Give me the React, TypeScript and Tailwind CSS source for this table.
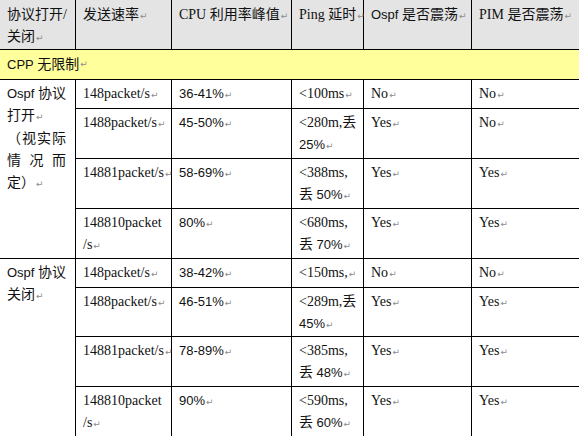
import type { ReactNode } from "react";

const serif = "font-['Liberation_Serif','Noto_Sans_CJK_SC',serif]";
const sans = "font-['Liberation_Sans','Noto_Sans_CJK_SC',sans-serif] text-[13px]";

function M() {
  return (
    <span className="ml-[1px] font-['DejaVu_Sans',sans-serif] text-[9px] text-[#8c8c8c]">
      ↵
    </span>
  );
}

function S({ children }: { children: ReactNode }) {
  return <span className={sans}>{children}</span>;
}

function Cell({
  lines,
  className = "",
  last = false,
}: {
  lines: ReactNode[];
  className?: string;
  last?: boolean;
}) {
  return (
    <div
      className={`${last ? "" : "border-r"} border-b border-black px-[7px] pt-[3px] leading-[22px] ${className}`}
    >
      {lines.map((l, i) => (
        <div key={i} className="whitespace-nowrap">
          {l}
        </div>
      ))}
    </div>
  );
}

type Row = {
  rate: ReactNode[];
  cpu: string;
  ping: ReactNode[];
  ospf: string;
  pim: string;
};

const opened: Row[] = [
  {
    rate: [<>148packet/s<M /></>],
    cpu: "36-41%",
    ping: [<>&lt;100ms<M /></>],
    ospf: "No",
    pim: "No",
  },
  {
    rate: [<>1488packet/s<M /></>],
    cpu: "45-50%",
    ping: [<>&lt;280m,丢</>, <><S>25%</S><M /></>],
    ospf: "Yes",
    pim: "No",
  },
  {
    rate: [<>14881packet/s<M /></>],
    cpu: "58-69%",
    ping: [<>&lt;388ms,</>, <>丢 <S>50%</S><M /></>],
    ospf: "Yes",
    pim: "Yes",
  },
  {
    rate: [<>148810packet</>, <>/s<M /></>],
    cpu: "80%",
    ping: [<>&lt;680ms,</>, <>丢 <S>70%</S><M /></>],
    ospf: "Yes",
    pim: "Yes",
  },
];

const closed: Row[] = [
  {
    rate: [<>148packet/s<M /></>],
    cpu: "38-42%",
    ping: [<>&lt;150ms,<M /></>],
    ospf: "No",
    pim: "No",
  },
  {
    rate: [<>1488packet/s<M /></>],
    cpu: "46-51%",
    ping: [<>&lt;289m,丢</>, <><S>45%</S><M /></>],
    ospf: "Yes",
    pim: "Yes",
  },
  {
    rate: [<>14881packet/s<M /></>],
    cpu: "78-89%",
    ping: [<>&lt;385ms,</>, <>丢 <S>48%</S><M /></>],
    ospf: "Yes",
    pim: "Yes",
  },
  {
    rate: [<>148810packet</>, <>/s<M /></>],
    cpu: "90%",
    ping: [<>&lt;590ms,</>, <>丢 <S>60%</S><M /></>],
    ospf: "Yes",
    pim: "Yes",
  },
];

function Rows({ data }: { data: Row[] }) {
  return (
    <>
      {data.map((r, i) => (
        <div key={i} className="contents">
          <Cell lines={r.rate} />
          <Cell lines={[<><S>{r.cpu}</S><M /></>]} />
          <Cell lines={r.ping} />
          <Cell lines={[<>{r.ospf}<M /></>]} />
          <Cell lines={[<>{r.pim}<M /></>]} last />
        </div>
      ))}
    </>
  );
}

export default function App() {
  return (
    <div className={`h-[436px] w-[579px] overflow-hidden bg-white text-[14px] text-[#111] ${serif}`}>
      <div className="grid grid-cols-[76px_96px_120px_72px_108px_1fr] grid-rows-[50px_30px_29px_50px_50px_50px_29px_49px_50px_50px]">
        {/* header */}
        <Cell
          className="bg-[#e4e4e4] pt-[4px]"
          lines={["协议打开/", <>关闭<M /></>]}
        />
        <Cell className="bg-[#e4e4e4] pt-[4px]" lines={[<>发送速率<M /></>]} />
        <Cell className="bg-[#e4e4e4] pt-[4px]" lines={[<>CPU 利用率峰值<M /></>]} />
        <Cell className="bg-[#e4e4e4] pt-[4px]" lines={[<>Ping 延时<M /></>]} />
        <Cell
          className="bg-[#e4e4e4] pt-[4px]"
          lines={[<><S>Ospf</S> 是否震荡<M /></>]}
        />
        <Cell className="bg-[#e4e4e4] pt-[4px]" lines={[<>PIM 是否震荡<M /></>]} last />

        <div className="col-span-6 flex items-center border-b border-black bg-[#ffff9c] px-[7px]">
          <S>CPP</S>&nbsp;无限制<M />
        </div>

        <div className="row-span-4 border-r border-b border-black px-[7px] pt-[3px] leading-[22px]">
          <div className="whitespace-nowrap">
            <S>Ospf</S> 协议
          </div>
          <div>
            打开<M />
          </div>
          <div className="flex justify-between pr-[2px]">
            <span>（</span>
            <span>视</span>
            <span>实</span>
            <span>际</span>
          </div>
          <div className="flex justify-between pr-[2px]">
            <span>情</span>
            <span>况</span>
            <span>而</span>
          </div>
          <div>
            定）<M />
          </div>
        </div>
        <Rows data={opened} />

        <div className="row-span-4 border-r border-b border-black px-[7px] pt-[3px] leading-[22px]">
          <div className="whitespace-nowrap">
            <S>Ospf</S> 协议
          </div>
          <div>
            关闭<M />
          </div>
        </div>
        <Rows data={closed} />
      </div>
    </div>
  );
}
